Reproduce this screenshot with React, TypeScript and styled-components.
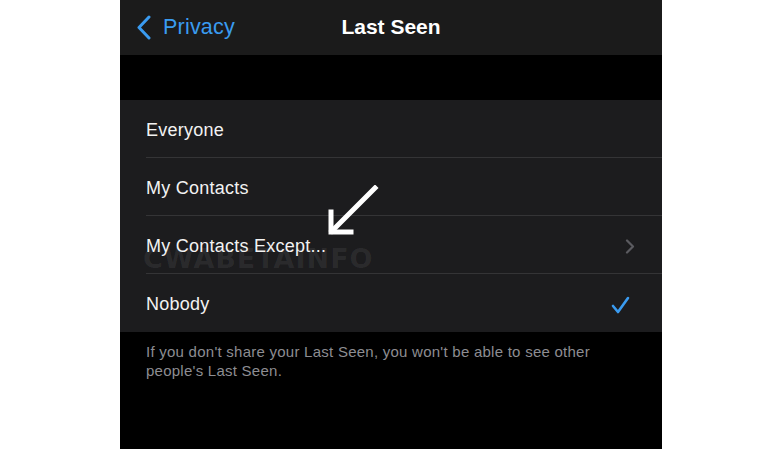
import React from 'react';
import styled, {createGlobalStyle} from 'styled-components';

const GlobalStyle = createGlobalStyle`
  html, body {
    margin: 0;
    padding: 0;
    background: #ffffff;
  }
  body {
    font-family: 'Liberation Sans', Arial, sans-serif;
    -webkit-font-smoothing: antialiased;
  }
`;

const color = {
  blue: '#3a9bf0',
  cell: '#1c1c1e',
  nav: '#1b1b1b',
  separator: '#343436',
  footer: '#8d8d92',
  chevron: '#5b5b60',
};

type Option = {
  label: string;
  accessory?: 'chevron' | 'check';
};

const options: Option[] = [
  {label: 'Everyone'},
  {label: 'My Contacts'},
  {label: 'My Contacts Except...', accessory: 'chevron'},
  {label: 'Nobody', accessory: 'check'},
];

const BackChevron = () => (
  <svg width="17" height="25" viewBox="0 0 17 25">
    <path d="M14 2 L4 12.5 L14 23" fill="none" stroke={color.blue} strokeWidth="3" strokeLinecap="round" strokeLinejoin="round"/>
  </svg>
);

const Chevron = () => (
  <svg width="10" height="15" viewBox="0 0 10 15">
    <path d="M2 1.5 L8 7.5 L2 13.5" fill="none" stroke={color.chevron} strokeWidth="2.2" strokeLinecap="round" strokeLinejoin="round"/>
  </svg>
);

const Check = () => (
  <svg width="19" height="18" viewBox="0 0 19 18">
    <path d="M2 10 L7 16 L17 2" fill="none" stroke={color.blue} strokeWidth="2.6" strokeLinecap="round" strokeLinejoin="round"/>
  </svg>
);

const Arrow = () => (
  <svg width="56" height="56" viewBox="0 0 56 56">
    <g fill="none" stroke="#ffffff" strokeWidth="5" strokeLinecap="square">
      <path d="M52 3 L9 46"/>
      <path d="M8 27 L8 47 L28 47"/>
    </g>
  </svg>
);

export default function App() {
  return (
    <>
      <GlobalStyle/>
      <Page>
        <Screen>
          <NavBar>
            <BackButton>
              <BackChevron/>
              <span>Privacy</span>
            </BackButton>
            <NavTitle>Last Seen</NavTitle>
          </NavBar>
          <Spacer/>
          <List>
            {options.map((option, i) => (
              <Row key={option.label} isLast={i === options.length - 1}>
                <RowLabel>{option.label}</RowLabel>
                {option.accessory === 'chevron' && <ChevronSlot><Chevron/></ChevronSlot>}
                {option.accessory === 'check' && <CheckSlot><Check/></CheckSlot>}
              </Row>
            ))}
            <Watermark>CWABETAINFO</Watermark>
            <ArrowMark><Arrow/></ArrowMark>
          </List>
          <Footer>
            If you don't share your Last Seen, you won't be able to see other people's Last Seen.
          </Footer>
        </Screen>
      </Page>
    </>
  );
}

const Page = styled.div`
  display: flex;
  justify-content: center;
  width: 782px;
  height: 449px;
  overflow: hidden;
  background: #ffffff;
`;

const Screen = styled.div`
  display: flex;
  flex-direction: column;
  width: 542px;
  height: 449px;
  background: #000000;
`;

const NavBar = styled.div`
  position: relative;
  display: flex;
  align-items: center;
  justify-content: center;
  height: 55px;
  padding-bottom: 2px;
  box-sizing: border-box;
  background: ${color.nav};
`;

const BackButton = styled.div`
  position: absolute;
  left: 15px;
  top: 14px;
  display: flex;
  align-items: center;
  gap: 11px;
  color: ${color.blue};
  font-size: 21.5px;
  letter-spacing: 0.2px;

  & span {
    margin-top: 1px;
  }
`;

const NavTitle = styled.div`
  color: #ffffff;
  font-size: 21px;
  font-weight: 700;
`;

const Spacer = styled.div`
  height: 45px;
`;

const List = styled.div`
  position: relative;
  display: flex;
  flex-direction: column;
  background: ${color.cell};
`;

const Row = styled.div<{isLast: boolean}>`
  position: relative;
  display: flex;
  align-items: center;
  height: 58px;
  padding-left: 26px;
  padding-right: 30px;
  box-sizing: border-box;

  &::after {
    content: '';
    display: ${(props) => props.isLast ? 'none' : 'block'};
    position: absolute;
    left: 26px;
    right: 0;
    bottom: 0;
    height: 1px;
    background: ${color.separator};
  }
`;

const RowLabel = styled.div`
  flex: 1;
  color: #f2f2f2;
  font-size: 18px;
  letter-spacing: 0.25px;
  margin-top: 3px;
  position: relative;
  z-index: 1;
`;

const ChevronSlot = styled.div`
  display: flex;
  margin-top: 2px;
  margin-right: -3px;
`;

const CheckSlot = styled.div`
  display: flex;
  margin-top: 3px;
  margin-right: 2px;
`;

const Watermark = styled.div`
  position: absolute;
  left: 23px;
  top: 145px;
  color: rgba(255, 255, 255, 0.07);
  font-family: 'DejaVu Sans', sans-serif;
  font-size: 27px;
  font-weight: 700;
  letter-spacing: 1px;
  line-height: 1;
  pointer-events: none;
`;

const ArrowMark = styled.div`
  position: absolute;
  left: 203px;
  top: 85px;
  display: flex;
  z-index: 2;
`;

const Footer = styled.div`
  padding: 10px 46px 0 26px;
  color: ${color.footer};
  font-size: 15px;
  letter-spacing: 0.25px;
  line-height: 19px;
`;
